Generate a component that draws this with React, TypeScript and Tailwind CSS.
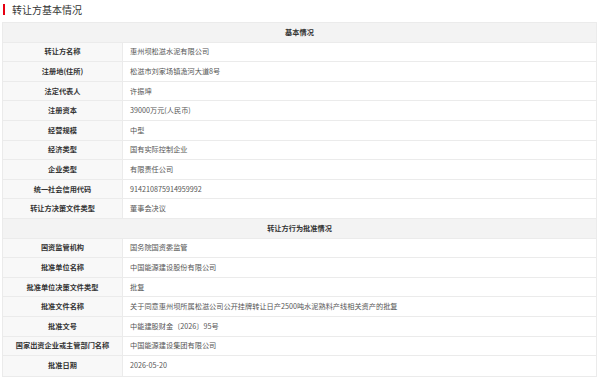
import React from "react";

type Row = [string, string] | { section: string };

const ROWS: Row[] = [
  { section: "基本情况" },
  ["转让方名称", "惠州坝松滋水泥有限公司"],
  ["注册地(住所)", "松滋市刘家场镇洈河大道8号"],
  ["法定代表人", "许振坤"],
  ["注册资本", "39000万元(人民币)"],
  ["经营规模", "中型"],
  ["经济类型", "国有实际控制企业"],
  ["企业类型", "有限责任公司"],
  ["统一社会信用代码", "914210875914959992"],
  ["转让方决策文件类型", "董事会决议"],
  { section: "转让方行为批准情况" },
  ["国资监管机构", "国务院国资委监管"],
  ["批准单位名称", "中国能源建设股份有限公司"],
  ["批准单位决策文件类型", "批复"],
  ["批准文件名称", "关于同意惠州坝所属松滋公司公开挂牌转让日产2500吨水泥熟料产线相关资产的批复"],
  ["批准文号", "中能建股财金〔2026〕95号"],
  ["国家出资企业或主管部门名称", "中国能源建设集团有限公司"],
  ["批准日期", "2026-05-20"],
];

export default function App() {
  return (
    <div
      className="w-[600px] h-[380px] bg-white overflow-hidden"
      style={{ fontFamily: '"Noto Sans CJK SC", "Noto Sans", sans-serif' }}
    >
      <div className="flex items-center h-[19px] pl-[3px] gap-[7px]">
        <span className="w-[2px] h-[11px] bg-[#e60012]" />
        <span className="text-[10px] leading-none text-[#333]">转让方基本情况</span>
      </div>
      <div className="mx-[2px] mt-[3px] w-[595px] border border-[#ebebeb]">
        {ROWS.map((r, i) =>
          "section" in r ? (
            <div
              key={i}
              className="h-[19.6px] flex items-center justify-center bg-[#f3f3f3] border-b border-[#ebebeb] text-[7.2px] font-bold text-[#333]"
            >
              {r.section}
            </div>
          ) : (
            <div
              key={i}
              className={`h-[19.6px] flex ${i === ROWS.length - 1 ? "" : "border-b border-[#ebebeb]"}`}
            >
              <div className="w-[120px] shrink-0 flex items-center justify-center bg-[#f8f8f8] border-r border-[#ebebeb] text-[7.2px] font-bold text-[#333]">
                {r[0]}
              </div>
              <div className="flex-1 flex items-center pl-[7px] text-[7.2px] text-[#555]">
                {r[1]}
              </div>
            </div>
          )
        )}
      </div>
    </div>
  );
}
